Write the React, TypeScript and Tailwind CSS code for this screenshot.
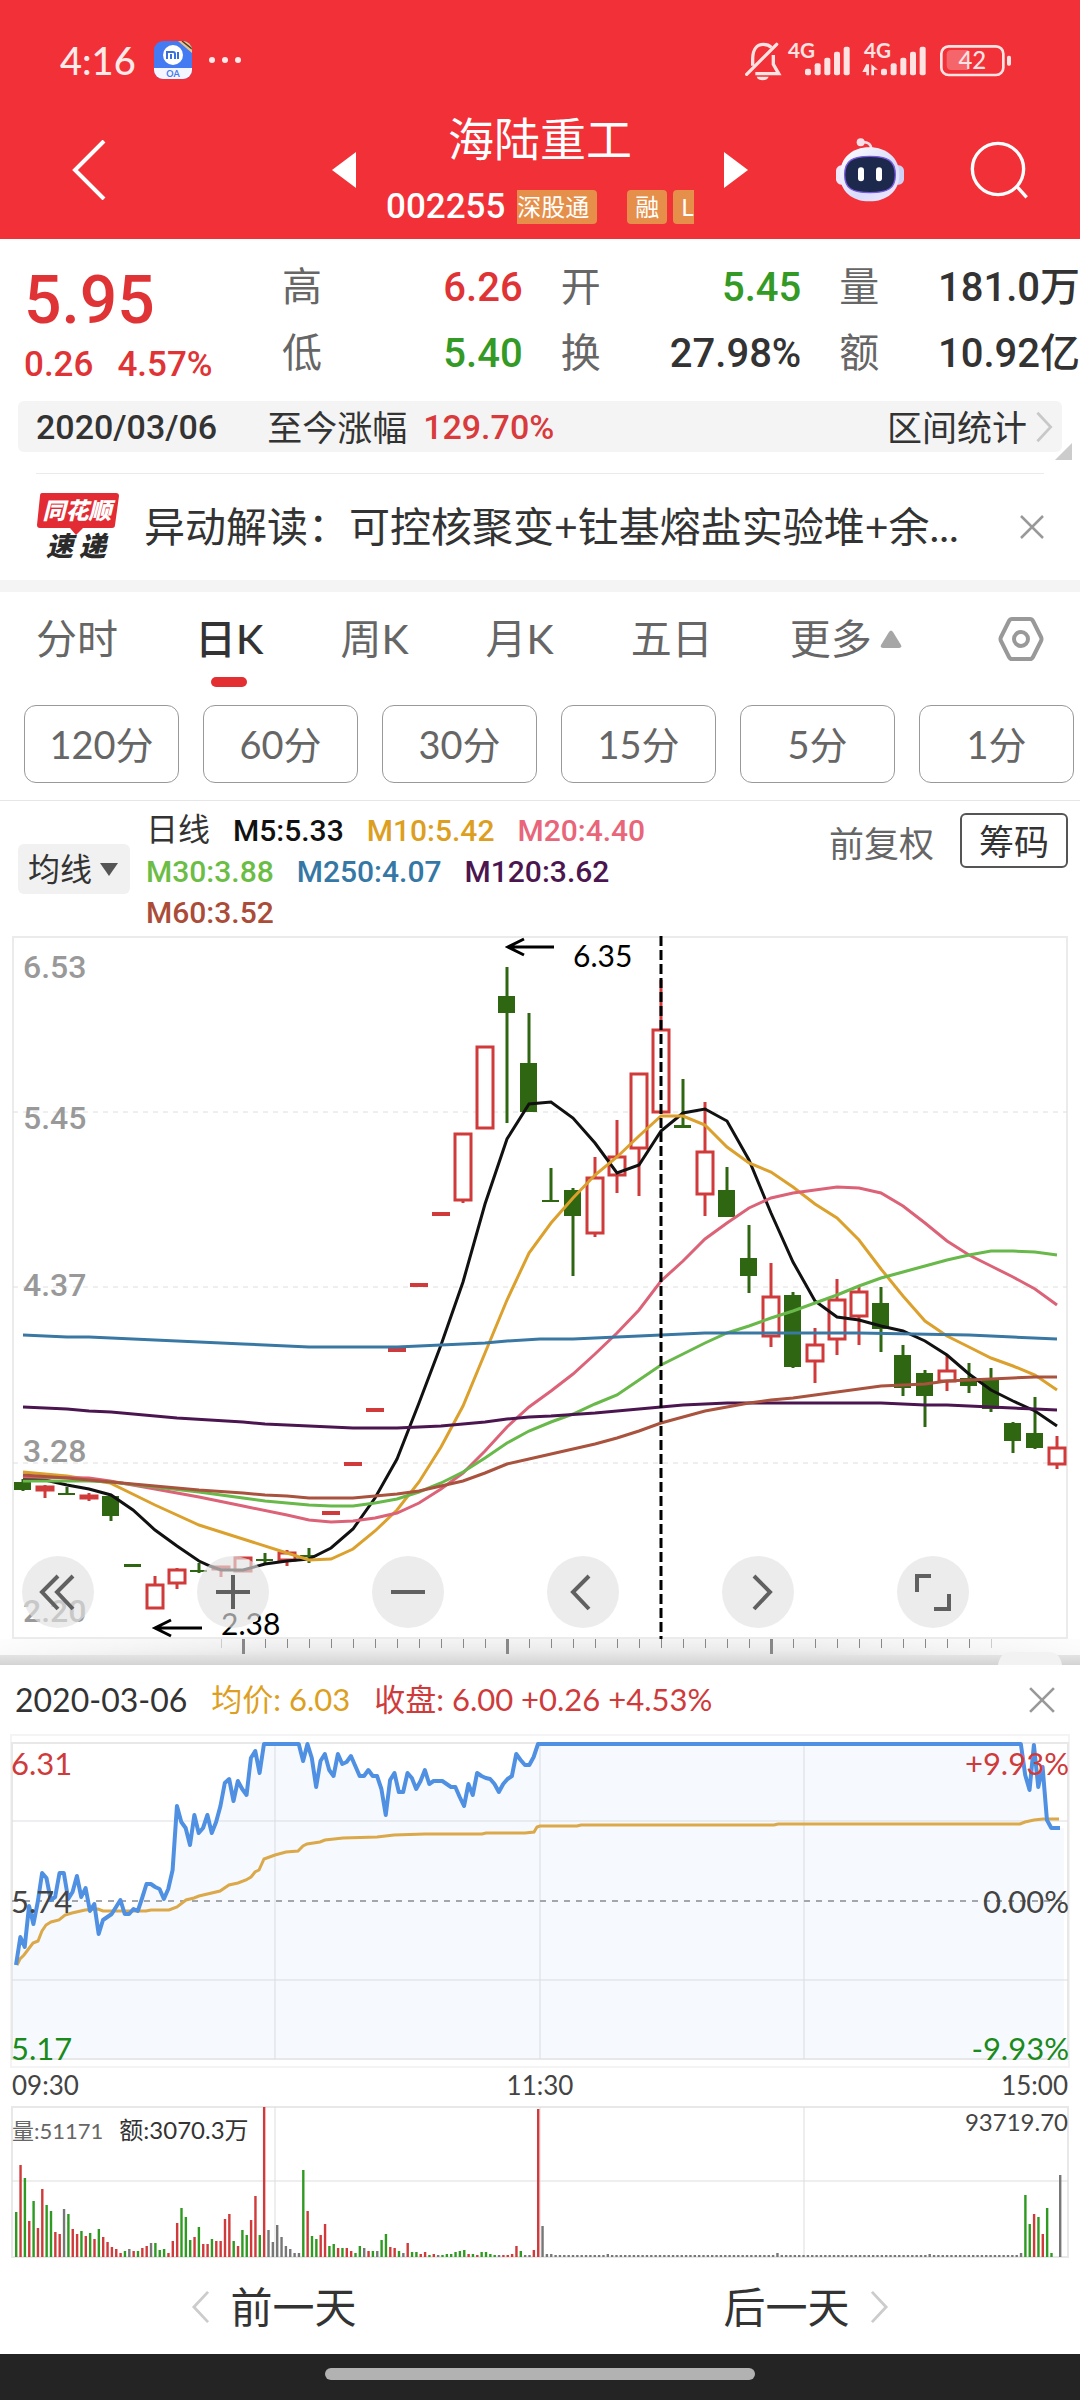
import { ReactNode } from 'react';

type Tone = 'r' | 'g' | 'k';

const TONE: Record<Tone, string> = { r: '#d03a3a', g: '#2f9a22', k: '#777777' };

const QUOTES = [
  { label: '高', value: '6.26', color: 'text-[#e03335]' },
  { label: '开', value: '5.45', color: 'text-[#349a26]' },
  { label: '量', value: '181.0万', color: 'text-[#333333]' },
  { label: '低', value: '5.40', color: 'text-[#349a26]' },
  { label: '换', value: '27.98%', color: 'text-[#333333]' },
  { label: '额', value: '10.92亿', color: 'text-[#333333]' },
];

const TABS = ['分时', '日K', '周K', '月K', '五日'];
const PERIODS = ['120分', '60分', '30分', '15分', '5分', '1分'];

const LEGEND = [
  [
    { text: 'M5:5.33', color: 'text-[#111111]' },
    { text: 'M10:5.42', color: 'text-[#dd9f22]' },
    { text: 'M20:4.40', color: 'text-[#e8657a]' },
  ],
  [
    { text: 'M30:3.88', color: 'text-[#6cbd45]' },
    { text: 'M250:4.07', color: 'text-[#3577a5]' },
    { text: 'M120:3.62', color: 'text-[#4b1650]' },
  ],
  [{ text: 'M60:3.52', color: 'text-[#ab4c38]' }],
];

// tone, body top, body bottom, wick top, wick bottom
const CANDLES: [Tone, number, number, number, number][] = [
  ['g', 1482, 1490, 1479, 1491],
  ['r', 1487, 1490, 1485, 1498],
  ['g', 1493, 1495, 1487, 1495],
  ['r', 1496, 1498, 1493, 1501],
  ['g', 1496, 1516, 1496, 1521],
  ['g', 1564, 1567, 1564, 1567],
  ['r', 1585, 1608, 1576, 1608],
  ['r', 1570, 1583, 1568, 1589],
  ['g', 1570, 1572, 1563, 1573],
  ['r', 1567, 1569, 1566, 1577],
  ['r', 1558, 1571, 1558, 1571],
  ['g', 1559, 1561, 1553, 1565],
  ['r', 1553, 1560, 1550, 1566],
  ['g', 1555, 1557, 1548, 1563],
  ['r', 1513, 1513, 1513, 1513],
  ['r', 1464, 1464, 1464, 1464],
  ['r', 1410, 1410, 1410, 1410],
  ['r', 1350, 1350, 1350, 1350],
  ['r', 1285, 1285, 1285, 1285],
  ['r', 1214, 1214, 1214, 1214],
  ['r', 1134, 1200, 1134, 1203],
  ['r', 1047, 1128, 1047, 1128],
  ['g', 996, 1013, 967, 1123],
  ['g', 1063, 1112, 1013, 1112],
  ['g', 1200, 1202, 1168, 1202],
  ['g', 1190, 1216, 1188, 1276],
  ['r', 1178, 1233, 1157, 1237],
  ['r', 1157, 1175, 1120, 1193],
  ['r', 1074, 1148, 1074, 1196],
  ['r', 1030, 1112, 980, 1112],
  ['g', 1125, 1128, 1079, 1128],
  ['r', 1152, 1194, 1102, 1216],
  ['g', 1190, 1217, 1167, 1217],
  ['g', 1258, 1276, 1225, 1293],
  ['r', 1297, 1336, 1263, 1347],
  ['g', 1295, 1367, 1292, 1368],
  ['r', 1345, 1361, 1328, 1383],
  ['r', 1300, 1339, 1279, 1355],
  ['r', 1292, 1316, 1287, 1345],
  ['g', 1303, 1329, 1287, 1352],
  ['g', 1355, 1388, 1345, 1396],
  ['g', 1373, 1396, 1370, 1427],
  ['r', 1371, 1381, 1355, 1391],
  ['g', 1378, 1386, 1363, 1393],
  ['g', 1380, 1409, 1368, 1412],
  ['g', 1423, 1441, 1422, 1453],
  ['g', 1433, 1448, 1397, 1449],
  ['r', 1448, 1464, 1436, 1469],
];

const AVERAGES = [
  {
    name: 'M5',
    color: '#111111',
    points:
      '23,1479 45,1480 67,1485 89,1489 111,1495 133,1510 155,1530 177,1546 199,1561 210,1566 221,1570 243,1570 265,1564 287,1561 309,1559 331,1548 353,1529 375,1498 397,1459 419,1403 441,1345 463,1282 485,1204 507,1139 529,1104 551,1102 573,1118 595,1143 617,1173 639,1165 661,1131 683,1113 705,1109 727,1121 749,1160 771,1213 793,1262 815,1301 837,1317 859,1320 881,1326 903,1331 925,1341 947,1355 969,1374 991,1390 1013,1401 1035,1411 1057,1426',
  },
  {
    name: 'M10',
    color: '#dca02c',
    points:
      '23,1472 45,1474 67,1476 110,1483 155,1505 199,1525 243,1539 287,1553 309,1560 331,1559 353,1549 375,1531 397,1510 419,1482 441,1447 463,1406 485,1353 507,1300 529,1253 551,1223 573,1198 595,1175 617,1157 639,1136 661,1116 683,1116 705,1125 727,1147 749,1163 771,1172 793,1187 815,1204 837,1218 859,1240 881,1269 903,1296 925,1321 947,1336 969,1347 991,1358 1013,1366 1035,1375 1057,1390',
  },
  {
    name: 'M20',
    color: '#dc6278',
    points:
      '23,1477 89,1478 110,1481 155,1489 199,1497 243,1506 287,1515 309,1520 331,1522 353,1521 375,1518 397,1513 419,1503 441,1489 463,1473 485,1451 507,1427 529,1407 551,1391 573,1374 595,1354 617,1333 639,1310 661,1281 683,1261 705,1239 727,1223 749,1208 771,1198 793,1193 815,1190 837,1187 859,1188 881,1193 903,1206 925,1223 947,1241 969,1255 991,1266 1013,1277 1035,1289 1057,1305',
  },
  {
    name: 'M30',
    color: '#68b84a',
    points:
      '23,1481 89,1481 111,1482 155,1487 199,1492 243,1498 265,1501 287,1503 309,1505 331,1506 353,1506 375,1503 397,1499 419,1492 441,1483 463,1472 485,1458 507,1443 529,1431 551,1422 573,1414 595,1404 617,1395 639,1380 661,1365 683,1354 705,1343 727,1333 749,1326 771,1318 793,1311 815,1303 837,1295 859,1286 881,1278 903,1272 925,1266 947,1260 969,1255 991,1251 1013,1251 1035,1252 1057,1255',
  },
  {
    name: 'M250',
    color: '#3a78a4',
    points:
      '23,1335 67,1337 89,1337 155,1340 243,1344 309,1347 397,1347 441,1345 485,1343 507,1341 540,1339 573,1339 661,1335 705,1333 859,1333 969,1335 1013,1337 1057,1339',
  },
  {
    name: 'M120',
    color: '#4b1650',
    points:
      '23,1407 67,1409 89,1411 111,1412 177,1418 243,1422 265,1424 309,1426 353,1428 397,1428 441,1426 485,1422 507,1419 529,1417 551,1416 595,1413 661,1407 683,1405 727,1403 881,1403 925,1405 947,1405 991,1407 1035,1409 1057,1410',
  },
  {
    name: 'M60',
    color: '#a9523e',
    points:
      '23,1475 67,1478 111,1482 155,1486 199,1490 243,1493 265,1495 287,1496 309,1498 353,1498 375,1496 397,1494 419,1491 441,1486 463,1481 485,1473 507,1464 529,1459 595,1444 617,1438 639,1431 661,1423 705,1411 749,1403 771,1400 793,1398 837,1392 881,1386 925,1384 947,1381 991,1379 1035,1377 1057,1377',
  },
];

// one y per minute, 09:30 to 15:00
const PRICE = [
  1965, 1937, 1947, 1906, 1924, 1902, 1873, 1878, 1900, 1897, 1873, 1873, 1899, 1892, 1876, 1897, 1888, 1911, 1904, 1934,
  1920, 1917, 1914, 1907, 1900, 1914, 1914, 1909, 1911, 1898, 1884, 1884, 1887, 1889, 1899, 1889, 1870, 1806, 1822, 1828,
  1845, 1815, 1833, 1828, 1815, 1833, 1822, 1806, 1783, 1779, 1801, 1781, 1789, 1795, 1758, 1751, 1773, 1744, 1744, 1744,
  1744, 1744, 1744, 1744, 1744, 1744, 1761, 1744, 1758, 1787, 1761, 1754, 1770, 1776, 1754, 1764, 1762, 1756, 1766, 1776,
  1776, 1770, 1776, 1776, 1789, 1815, 1780, 1773, 1792, 1792, 1773, 1778, 1789, 1781, 1770, 1784, 1781, 1781, 1781, 1784,
  1787, 1787, 1797, 1806, 1784, 1795, 1773, 1776, 1778, 1779, 1784, 1792, 1784, 1779, 1776, 1754, 1760, 1765, 1765, 1757,
  ...Array<number>(112).fill(1744),
  1775, 1790, 1745, 1787, 1767, 1820, 1828, 1828, 1828,
];

const AVG_PRICE =
  '17,1965 20,1959 24,1955 33,1943 38,1941 42,1931 46,1925 51,1922 59,1920 65,1915 72,1913 85,1910 98,1909 103,1911 146,1911 151,1910 169,1910 177,1907 186,1900 194,1898 199,1896 220,1891 229,1885 238,1883 246,1880 251,1877 255,1872 259,1870 264,1859 275,1855 286,1852 298,1851 303,1846 307,1844 320,1842 325,1840 343,1838 377,1837 394,1835 425,1834 482,1834 486,1833 525,1833 534,1832 537,1827 540,1826 577,1826 581,1825 774,1825 778,1824 1020,1824 1025,1822 1034,1820 1043,1819 1059,1819';

const VOLUME = (
  'g45 r92 g79 r36 g56 r29 r68 g52 g46 r25 r23 k48 g43 r28 r23 g26 r21 g24 r18 g28 r20 r15 r10 r8 r4 g6 k8 r6 g6 r9 ' +
  'r11 k14 g14 g7 g8 r4 r16 r34 g49 g40 g17 r20 g30 r13 r13 g18 r16 r16 r38 r43 g16 r11 g27 g22 r37 r61 g22 r150 k27 k15 ' +
  'k32 k20 k11 k8 k4 k4 g87 r46 g21 g18 r22 r33 g11 g13 r9 g9 r9 r6 g4 g11 k9 r6 g6 k6 g17 g23 r10 r9 g6 k4 ' +
  'r14 g5 g5 r3 r5 g2 r3 k2 g2 g3 g3 g5 g6 g7 r3 g3 r2 g5 g5 g3 g2 k2 r2 r2 r3 r11 g6 k2 k2 r7 ' +
  'r148 k31 k3 k3 ' +
  'k2 '.repeat(12) +
  'k3 ' +
  'k2 '.repeat(38) +
  'k4 ' +
  'k2 '.repeat(34) +
  'k3 ' +
  'k2 '.repeat(20) +
  'k4 g62 g33 r43 g40 r23 g49 g4 k0 k82'
)
  .split(' ')
  .map((v) => ({ tone: v[0] as Tone, height: Number(v.slice(1)) }));

const minuteX = (i: number) => 16 + i * 4.35;
const pricePoints = PRICE.map((y, i) => `${minuteX(i)},${y}`).join(' ');

function Chevron({ dir, className }: { dir: 'left' | 'right'; className: string }) {
  return (
    <svg viewBox="0 0 20 36" fill="none" stroke="currentColor" strokeWidth="3" className={className} aria-hidden="true">
      <path d={dir === 'left' ? 'M18 2 3 18l15 16' : 'M2 2l15 16L2 34'} />
    </svg>
  );
}

function Cross({ className }: { className: string }) {
  return (
    <svg viewBox="0 0 24 24" fill="none" stroke="#999999" strokeWidth="2.5" className={className} aria-hidden="true">
      <path d="M1 1l22 22M23 1 1 23" />
    </svg>
  );
}

function Bars({ x }: { x: number }) {
  return (
    <g>
      {[20, 36, 53, 71, 86].map((h, i) => (
        <rect key={h} x={x + i * 29} y={133 - h} width="18" height={h} rx="6" />
      ))}
    </g>
  );
}

function StatusBar() {
  return (
    <div className="flex items-center justify-between pt-9 pl-[60px] pr-[69px] h-[84px]">
      <div className="flex items-center">
        <span className="text-[38px] leading-[48px] font-medium text-[#ffe9e9]">4:16</span>
        <svg viewBox="0 0 38 38" className="w-[38px] h-[38px] ml-[18px]" aria-hidden="true">
          <defs>
            <clipPath id="oa">
              <rect width="38" height="38" rx="9" />
            </clipPath>
          </defs>
          <g clipPath="url(#oa)">
            <rect width="38" height="38" fill="#447bf2" />
            <rect y="27" width="38" height="11" fill="#f4f6ff" />
            <path d="M24 0h14v12z" fill="#e8c48c" />
            <path d="M28 0l10 8" stroke="#4a3a2a" strokeWidth="1.5" />
          </g>
          <circle cx="19" cy="14" r="10" fill="#fff" />
          <path d="M13 18v-7h6q2 0 2 2v5M17 13v5M24 11v7" fill="none" stroke="#3a6fe0" strokeWidth="2" />
          <text x="19" y="36" fontSize="9" fontWeight="700" textAnchor="middle" fill="#447bf2">
            OA
          </text>
        </svg>
        <svg viewBox="0 0 34 8" fill="#ffe9e9" className="w-[34px] h-2 ml-4" aria-hidden="true">
          <circle cx="4" cy="4" r="3" />
          <circle cx="17" cy="4" r="3" />
          <circle cx="30" cy="4" r="3" />
        </svg>
      </div>
      <svg viewBox="75 15 798 144" fill="#ffe3e3" className="w-[266px] h-12" aria-hidden="true">
        <g fill="none" stroke="#ffe3e3" strokeWidth="10">
          <path d="M98 104V84C98 54 112 40 130 40c10 0 18 3 24 9" />
          <path d="M160 72v28l16 28h-70" />
          <path d="M80 130 170 40" strokeLinecap="round" />
        </g>
        <path d="M110 137h36c-4 14-32 14-36 0z" />
        <text x="204" y="80" fontSize="62" fontWeight="700">
          4G
        </text>
        <Bars x={255} />
        <text x="432" y="80" fontSize="62" fontWeight="700">
          4G
        </text>
        <path d="M439 100h8v33h-8v-10h-12zM454 100l20 16h-12v17h-8z" />
        <Bars x={483} />
        <rect x="664" y="46" width="186" height="86" rx="22" fill="none" stroke="#ffe3e3" strokeWidth="8" />
        <path d="M694 57h51v60h-51q-14 0-14-14V71q0-14 14-14z" fillOpacity=".3" />
        <text x="757" y="115" fontSize="72" fontWeight="500" textAnchor="middle">
          42
        </text>
        <rect x="861" y="74" width="12" height="30" rx="5" />
      </svg>
    </div>
  );
}

function Robot() {
  return (
    <svg viewBox="0 0 204 192" className="w-[68px] h-16" aria-hidden="true">
      <defs>
        <linearGradient id="shell" x1="0" y1="0" x2="1" y2="1">
          <stop offset="0" stopColor="#ffffff" />
          <stop offset=".6" stopColor="#d9dcfb" />
          <stop offset="1" stopColor="#f2e9ff" />
        </linearGradient>
      </defs>
      <path d="M74 13q32-4 32 22" fill="none" stroke="#f3dbe6" strokeWidth="8" />
      <circle cx="74" cy="13" r="12" fill="#f6dfe9" />
      <rect x="0" y="82" width="34" height="58" rx="16" fill="#efe6fa" />
      <rect x="170" y="82" width="34" height="58" rx="16" fill="#cfd0f6" />
      <path
        d="M100 28c52 0 90 32 90 82s-38 80-90 80-88-30-88-80 36-82 88-82z"
        fill="url(#shell)"
      />
      <path
        d="M102 55c54 0 76 14 76 55s-22 54-76 54-76-13-76-54 22-55 76-55z"
        fill="#1d294c"
        stroke="#7a5be0"
        strokeWidth="4"
      />
      <rect x="66" y="88" width="18" height="42" rx="9" fill="#fff" />
      <rect x="120" y="88" width="18" height="42" rx="9" fill="#fff" />
    </svg>
  );
}

function StockNav() {
  return (
    <div className="grid grid-cols-[1fr_auto_1fr] items-center h-[155px] pt-4">
      <button type="button" aria-label="返回" className="justify-self-start ml-[72px]">
        <svg viewBox="0 0 34 60" fill="none" stroke="#fff" strokeWidth="4" className="w-[34px] h-[60px]">
          <path d="M32 1 3 30l29 29" />
        </svg>
      </button>
      <div className="flex items-center">
        <button type="button" aria-label="上一只">
          <svg viewBox="0 0 24 36" fill="#fff" className="w-6 h-9">
            <path d="M24 0v36L0 18z" />
          </svg>
        </button>
        <div className="w-[308px] ml-[30px] mr-[30px]">
          <h1 className="text-[46px] leading-[46px] text-center">海陆重工</h1>
          <div className="flex items-center mt-7 h-[34px]">
            <span className="[font-family:Roboto,sans-serif] font-medium text-[35px] leading-[34px]">002255</span>
            <div className="flex-1 flex ml-3 overflow-hidden text-2xl leading-[34px] whitespace-nowrap">
              <span className="bg-[#e58f4a] rounded px-2 -ml-2">深股通</span>
              <span className="bg-[#e58f4a] rounded px-2 ml-[30px] mr-1.5">融</span>
              <span className="bg-[#e58f4a] rounded pl-2 pr-4">L</span>
            </div>
          </div>
        </div>
        <button type="button" aria-label="下一只">
          <svg viewBox="0 0 24 36" fill="#fff" className="w-6 h-9">
            <path d="M0 0v36l24-18z" />
          </svg>
        </button>
      </div>
      <div className="flex items-center justify-end gap-[66px] mr-[52px]">
        <button type="button" aria-label="智能助手">
          <Robot />
        </button>
        <button type="button" aria-label="搜索">
          <svg viewBox="0 0 172 172" fill="none" stroke="#fff" strokeWidth="10" className="w-[58px] h-[58px]">
            <circle cx="83" cy="83" r="76" />
            <path d="M138 134l30 33" />
          </svg>
        </button>
      </div>
    </div>
  );
}

function Quote() {
  return (
    <section className="flex items-start pl-6 pt-4 pb-2.5 [font-family:Roboto,'Noto_Sans_CJK_SC',sans-serif] font-medium">
      <div className="w-[258px] shrink-0 pt-2 text-[#e03335]">
        <p className="text-[66px] leading-[76px]">5.95</p>
        <p className="flex gap-6 text-[35px] leading-[52px]">
          <span>0.26</span>
          <span>4.57%</span>
        </p>
      </div>
      <dl className="flex-1 grid grid-cols-3 gap-x-[38px] text-[40px] leading-[66px] whitespace-nowrap">
        {QUOTES.map((q) => (
          <div key={q.label} className="flex justify-between">
            <dt className="font-normal text-[#666666]">{q.label}</dt>
            <dd className={q.color}>{q.value}</dd>
          </div>
        ))}
      </dl>
    </section>
  );
}

function RangeBar() {
  return (
    <div className="relative mx-[18px] h-[51px] rounded-md bg-[#f4f4f4] flex items-center pl-[18px] pr-2 text-[35px] leading-[48px] text-[#333333]">
      <span className="[font-family:Roboto,sans-serif] font-medium text-[34px]">2020/03/06</span>
      <span className="ml-[50px]">至今涨幅</span>
      <span className="ml-4 [font-family:Roboto,sans-serif] font-medium text-[34px] text-[#d93a3c]">129.70%</span>
      <button type="button" className="ml-auto flex items-center gap-2">
        区间统计
        <Chevron dir="right" className="w-[19px] h-8 text-[#c8c8c8]" />
      </button>
      <svg viewBox="0 0 17 17" fill="#cccccc" className="absolute -right-2.5 -bottom-2 w-[17px] h-[17px]" aria-hidden="true">
        <path d="M17 0v17H0z" />
      </svg>
    </div>
  );
}

function News() {
  return (
    <div className="mx-9 mt-[21px] h-[107px] border-t border-[#ebebeb] flex items-center">
      <svg viewBox="0 0 84 88" className="w-[84px] h-[88px]" role="img" aria-label="同花顺速递">
        <path d="M6 10h74q3 0 3 3l-4 29q0 3-3 3H47l-7 7-6-7H4q-3 0-3-3l3-29q0-3 2-3z" fill="#e32b33" />
        <text x="41" y="36" fontSize="23" fontWeight="900" fontStyle="italic" textAnchor="middle" fill="#fff">
          同花顺
        </text>
        <text x="10" y="73" fontSize="27" fontWeight="900" fontStyle="italic" fill="#2b2b2b">
          速
        </text>
        <text x="43" y="73" fontSize="27" fontWeight="900" fontStyle="italic" fill="#2b2b2b">
          递
        </text>
      </svg>
      <a href="#news" className="flex-1 min-w-0 ml-6 text-[41px] leading-[60px] text-[#333333] whitespace-nowrap overflow-hidden">
        异动解读：可控核聚变+钍基熔盐实验堆+余...
      </a>
      <button type="button" aria-label="关闭" className="ml-6">
        <Cross className="w-6 h-6" />
      </button>
    </div>
  );
}

function Tabs() {
  return (
    <nav className="flex items-center gap-[77px] h-[94px] px-9 text-[41px] text-[#666666]">
      {TABS.map((t) => (
        <button
          key={t}
          type="button"
          className={`relative h-full whitespace-nowrap ${t === '日K' ? 'text-[#333333] font-medium' : ''}`}
        >
          {t}
          {t === '日K' && (
            <span className="absolute left-1/2 -bottom-px -translate-x-1/2 w-9 h-2.5 rounded-full bg-[#e32f31]" />
          )}
        </button>
      ))}
      <button type="button" className="flex items-center gap-2 whitespace-nowrap">
        更多
        <svg viewBox="0 0 22 18" fill="#a6a6a6" className="w-[22px] h-[18px]" aria-hidden="true">
          <path d="M9 2q2-3 4 0l8 13q1 3-2 3H3q-3 0-2-3z" />
        </svg>
      </button>
      <button type="button" aria-label="设置" className="ml-auto shrink-0">
        <svg viewBox="0 0 46 46" fill="none" stroke="#999999" strokeWidth="4" strokeLinejoin="round" className="w-[46px] h-[46px]">
          <path d="M14 3h18q2 0 3 2l8 16q1 2 0 4l-8 16q-1 2-3 2H14q-2 0-3-2L3 25q-1-2 0-4l8-16q1-2 3-2z" />
          <circle cx="23" cy="23" r="7" />
        </svg>
      </button>
    </nav>
  );
}

function Periods() {
  return (
    <div className="grid grid-cols-6 gap-6 pl-6 pr-1.5 pt-[19px] pb-[17px] border-b border-[#e6e6e6]">
      {PERIODS.map((p) => (
        <button key={p} type="button" className="h-[78px] rounded-xl border border-[#999999] text-[38px] text-[#666666]">
          {p}
        </button>
      ))}
    </div>
  );
}

function Averages() {
  return (
    <div className="flex pt-[9px] pl-[18px] pr-3 text-[32px]">
      <div className="relative self-start mt-[34px]">
        <label htmlFor="indicator" className="sr-only">
          指标
        </label>
        <select
          id="indicator"
          defaultValue="ma"
          className="appearance-none w-28 h-[50px] pl-2.5 rounded-md bg-[#f1f1f1] text-[#333333]"
        >
          <option value="ma">均线</option>
        </select>
        <svg viewBox="0 0 18 13" fill="#555555" className="absolute right-3 top-[19px] w-[18px] h-[13px] pointer-events-none">
          <path d="M0 0h18L9 13z" />
        </svg>
      </div>
      <div className="flex-1 ml-4 [font-family:Roboto,'Noto_Sans_CJK_SC',sans-serif] font-medium text-[30px]">
        {LEGEND.map((row, i) => (
          <div key={row[0].text} className="flex gap-[23px] leading-[41px]">
            {i === 0 && <span className="text-[#333333] font-normal text-[32px]">日线</span>}
            {row.map((item) => (
              <span key={item.text} className={item.color}>
                {item.text}
              </span>
            ))}
          </div>
        ))}
      </div>
      <button type="button" className="self-start mt-1.5 h-[54px] text-[35px] text-[#666666]">
        前复权
      </button>
      <button
        type="button"
        className="self-start mt-[3px] ml-[26px] w-[108px] h-[55px] rounded-md border-2 border-[#555555] text-[35px] leading-[50px] text-[#333333]"
      >
        筹码
      </button>
    </div>
  );
}

function Candle({ x, candle }: { x: number; candle: (typeof CANDLES)[number] }) {
  const [tone, top, bottom, high, low] = candle;
  if (tone === 'g') {
    return (
      <g fill="#2f6612">
        <rect x={x - 1.5} y={high} width="3" height={low - high} />
        <rect x={x - 9} y={top} width="17" height={bottom - top} />
      </g>
    );
  }
  if (top === bottom) {
    return <rect x={x - 9} y={top - 2} width="18" height="4" fill="#d03a3a" />;
  }
  return (
    <g fill="#fff" stroke="#d03a3a" strokeWidth="3">
      <path d={`M${x} ${high}V${low}`} />
      <rect x={x - 8} y={top} width="16" height={bottom - top} />
    </g>
  );
}

const TOOLS: { label: string; icon: ReactNode }[] = [
  { label: '最早', icon: <path d="M36 20 20 36l16 17M51 20 35 36l16 17" /> },
  { label: '放大', icon: <path d="M36 19v34M19 36h34" /> },
  { label: '缩小', icon: <path d="M19 36h34" /> },
  { label: '向左', icon: <path d="M42 20 26 36l16 17" /> },
  { label: '向右', icon: <path d="M32 20l16 16-16 17" /> },
  { label: '全屏', icon: <path d="M20 36V20h14M37 53h15V38" /> },
];

function KLineChart() {
  return (
    <section className="relative">
      <svg viewBox="0 933 1080 732" className="block w-full h-auto" role="img" aria-label="日K线图">
        <defs>
          <linearGradient id="drop" x1="0" y1="0" x2="0" y2="1">
            <stop offset="0" stopColor="#f4f4f4" />
            <stop offset=".4" stopColor="#ececec" />
            <stop offset="1" stopColor="#d4d4d4" />
          </linearGradient>
          <linearGradient id="edge" x1="0" y1="0" x2="1" y2="0">
            <stop offset="0" stopColor="#fff" stopOpacity=".8" />
            <stop offset=".25" stopColor="#fff" stopOpacity="0" />
            <stop offset=".75" stopColor="#fff" stopOpacity="0" />
            <stop offset="1" stopColor="#fff" stopOpacity=".8" />
          </linearGradient>
        </defs>

        <rect x="13" y="937" width="1054" height="701" fill="#fff" stroke="#ebebeb" strokeWidth="2" />
        <path d="M13 1112H1067M13 1287H1067M13 1463H1067" stroke="#dedede" strokeDasharray="5 5" />

        <g fontSize="32" fontWeight="500" fill="#999999" className="[font-family:Roboto,sans-serif]">
          <text x="23" y="978">6.53</text>
          <text x="23" y="1129">5.45</text>
          <text x="23" y="1296">4.37</text>
          <text x="23" y="1462">3.28</text>
          <text x="23" y="1622">2.20</text>
        </g>

        {CANDLES.map((c, i) => (
          <Candle key={i} x={23 + i * 22} candle={c} />
        ))}
        {AVERAGES.map((a) => (
          <polyline key={a.name} points={a.points} fill="none" stroke={a.color} strokeWidth="3" />
        ))}

        <g fill="none" stroke="#000" strokeWidth="3">
          <path d="M554 947H508M524 939l-16 8 16 8" />
          <path d="M202 1628H156M171 1620l-16 8 16 8" />
          <path d="M661 936V1639" strokeDasharray="10 4" />
        </g>
        <g fontSize="30" fill="#000">
          <text x="573" y="967">6.35</text>
          <text x="221" y="1635">2.38</text>
        </g>

        <rect y="1639" width="1080" height="26" fill="url(#drop)" />
        <rect y="1639" width="1080" height="16" fill="url(#edge)" />
        {Array.from({ length: 36 }, (_, i) => {
          const major = i % 12 === 1;
          return (
            <rect
              key={i}
              x={221 + i * 22 - (major ? 1 : 0)}
              y="1639"
              width={major ? 3 : 1}
              height={major ? 15 : 9}
              fill={i === 0 || i === 35 ? '#cccccc' : '#888888'}
            />
          );
        })}
        <path d="M998 1665q2-13 14-13h36q12 0 14 13z" fill="#f2f2f2" />
      </svg>
      <div className="absolute inset-x-0 bottom-[37px] flex justify-between pl-[22px] pr-[111px]">
        {TOOLS.map((t) => (
          <button key={t.label} type="button" aria-label={t.label} className="w-[72px] h-[72px] rounded-full bg-[#e2e2e2]/65">
            <svg viewBox="0 0 72 72" fill="none" stroke="#606060" strokeWidth="4" className="w-full h-full">
              {t.icon}
            </svg>
          </button>
        ))}
      </div>
    </section>
  );
}

function IntradayPanel() {
  return (
    <section className="bg-white">
      <div className="flex items-center h-[69px] pl-[15px] pr-[25px] text-[31px] whitespace-nowrap">
        <span className="text-[32px] text-[#333333]">2020-03-06</span>
        <span className="ml-6 text-[#dd9f22]">均价: 6.03</span>
        <span className="ml-6 text-[#cf3b3b]">收盘: 6.00 +0.26 +4.53%</span>
        <button type="button" aria-label="关闭分时" className="ml-auto">
          <Cross className="w-[26px] h-[26px]" />
        </button>
      </div>

      <svg viewBox="0 1734 1080 334" className="block w-full h-auto" role="img" aria-label="分时走势">
        <rect x="11" y="1735" width="1058" height="332" fill="none" stroke="#f4f4f4" strokeWidth="2" />
        <polygon points={`${minuteX(0)},2059 12,2059 12,1965 ${pricePoints} 1064,1828 1064,2059`} fill="#f6fafe" />
        <rect x="12" y="1743" width="1056" height="316" fill="none" stroke="#e8e8e8" strokeWidth="2" />
        <path d="M12 1821H1068M12 1980H1068M275 1743V2059M540 1743V2059M804 1743V2059" stroke="#d9dde2" />
        <path d="M12 1901H1068" stroke="#a3a6aa" strokeWidth="2" strokeDasharray="6 6" />
        <polyline points={AVG_PRICE} fill="none" stroke="#dba84a" strokeWidth="3" />
        <polyline points={pricePoints} fill="none" stroke="#4f90e2" strokeWidth="4" strokeLinejoin="round" />
        <g fontSize="31">
          <text x="11" y="1775" fill="#cf3b3b">6.31</text>
          <text x="11" y="1913" fill="#444444">5.74</text>
          <text x="11" y="2060" fill="#1a8a1a">5.17</text>
          <g textAnchor="end">
            <text x="1069" y="1775" fill="#cf3b3b">+9.93%</text>
            <text x="1069" y="1913" fill="#444444">0.00%</text>
            <text x="1069" y="2060" fill="#1a8a1a">-9.93%</text>
          </g>
        </g>
      </svg>

      <div className="grid grid-cols-3 h-[34px] px-3 text-[26px] leading-[34px] text-[#444444]">
        <span>09:30</span>
        <span className="text-center">11:30</span>
        <span className="text-right">15:00</span>
      </div>

      <div className="relative">
        <svg viewBox="0 2102 1080 158" className="block w-full h-auto" role="img" aria-label="成交量">
          <rect x="12" y="2107" width="1056" height="150" fill="none" stroke="#e8e8e8" strokeWidth="2" />
          <path d="M12 2181H1068M275 2107V2257M540 2107V2257M804 2107V2257" stroke="#dddddd" />
          {VOLUME.map((v, i) => (
            <rect key={i} x={minuteX(i) - 1} y={2257 - v.height} width="2.4" height={v.height} fill={TONE[v.tone]} />
          ))}
        </svg>
        <div className="absolute inset-x-3 top-2 flex items-start text-2xl">
          <span className="mt-1.5 text-[22px] text-[#666666]">量:51171</span>
          <span className="mt-1 ml-4 text-[#333333]">额:3070.3万</span>
          <span className="ml-auto -mt-1 text-[#444444]">93719.70</span>
        </div>
      </div>

      <div className="grid grid-cols-2 h-[94px] px-2 text-[42px] text-[#333333]">
        <button type="button" className="flex items-center justify-center gap-5">
          <Chevron dir="left" className="w-[19px] h-[34px] text-[#cccccc]" />
          前一天
        </button>
        <button type="button" className="flex items-center justify-center gap-5">
          后一天
          <Chevron dir="right" className="w-[19px] h-[34px] text-[#cccccc]" />
        </button>
      </div>
    </section>
  );
}

export default function App() {
  return (
    <main className="bg-white overflow-hidden [font-family:Lato,'Noto_Sans_CJK_SC',sans-serif]">
      <header className="bg-[#f13037] text-white">
        <StatusBar />
        <StockNav />
      </header>
      <Quote />
      <RangeBar />
      <News />
      <div className="h-3 bg-[#f4f4f4]" />
      <Tabs />
      <Periods />
      <Averages />
      <KLineChart />
      <IntradayPanel />
      <div className="h-[46px] pt-3.5 bg-[#242424]">
        <div className="mx-auto w-[430px] h-3 rounded-full bg-[#b2b2b2]" />
      </div>
    </main>
  );
}
